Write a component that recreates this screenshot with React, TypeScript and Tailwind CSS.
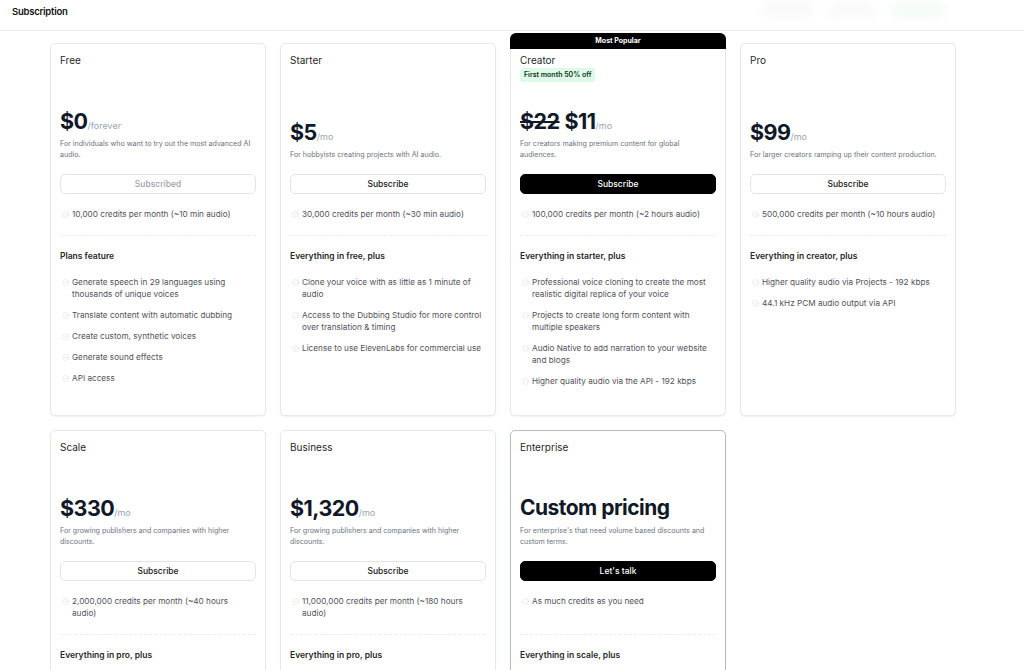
import React from "react";
import { CircleCheck } from "lucide-react";

type Plan = {
  name: string;
  badge?: string;
  popular?: boolean;
  strike?: string;
  price: string;
  unit?: string;
  desc: string;
  button: string;
  variant: "outline" | "dark" | "muted";
  credit: string;
  tallCredit?: boolean;
  heading: string;
  features: string[];
  highlight?: boolean;
};

const plans: Plan[] = [
  {
    name: "Free",
    price: "$0",
    unit: "/forever",
    desc: "For individuals who want to try out the most advanced AI audio.",
    button: "Subscribed",
    variant: "muted",
    credit: "10,000 credits per month (~10 min audio)",
    heading: "Plans feature",
    features: [
      "Generate speech in 29 languages using thousands of unique voices",
      "Translate content with automatic dubbing",
      "Create custom, synthetic voices",
      "Generate sound effects",
      "API access",
    ],
  },
  {
    name: "Starter",
    price: "$5",
    unit: "/mo",
    desc: "For hobbyists creating projects with AI audio.",
    button: "Subscribe",
    variant: "outline",
    credit: "30,000 credits per month (~30 min audio)",
    heading: "Everything in free, plus",
    features: [
      "Clone your voice with as little as 1 minute of audio",
      "Access to the Dubbing Studio for more control over translation & timing",
      "License to use ElevenLabs for commercial use",
    ],
  },
  {
    name: "Creator",
    badge: "First month 50% off",
    popular: true,
    strike: "$22",
    price: "$11",
    unit: "/mo",
    desc: "For creators making premium content for global audiences.",
    button: "Subscribe",
    variant: "dark",
    credit: "100,000 credits per month (~2 hours audio)",
    heading: "Everything in starter, plus",
    features: [
      "Professional voice cloning to create the most realistic digital replica of your voice",
      "Projects to create long form content with multiple speakers",
      "Audio Native to add narration to your website and blogs",
      "Higher quality audio via the API - 192 kbps",
    ],
  },
  {
    name: "Pro",
    price: "$99",
    unit: "/mo",
    desc: "For larger creators ramping up their content production.",
    button: "Subscribe",
    variant: "outline",
    credit: "500,000 credits per month (~10 hours audio)",
    heading: "Everything in creator, plus",
    features: [
      "Higher quality audio via Projects - 192 kbps",
      "44.1 kHz PCM audio output via API",
    ],
  },
  {
    name: "Scale",
    price: "$330",
    unit: "/mo",
    desc: "For growing publishers and companies with higher discounts.",
    button: "Subscribe",
    variant: "outline",
    credit: "2,000,000 credits per month (~40 hours audio)",
    tallCredit: true,
    heading: "Everything in pro, plus",
    features: ["3 Workspace seats", "Priority support"],
  },
  {
    name: "Business",
    price: "$1,320",
    unit: "/mo",
    desc: "For growing publishers and companies with higher discounts.",
    button: "Subscribe",
    variant: "outline",
    credit: "11,000,000 credits per month (~180 hours audio)",
    tallCredit: true,
    heading: "Everything in pro, plus",
    features: ["Low-latency TTS as low as 5c/min", "5 Workspace seats"],
  },
  {
    name: "Enterprise",
    price: "Custom pricing",
    desc: "For enterprise's that need volume based discounts and custom terms.",
    button: "Let's talk",
    variant: "dark",
    credit: "As much credits as you need",
    tallCredit: true,
    heading: "Everything in scale, plus",
    features: ["Custom terms & assurance", "Dedicated support"],
    highlight: true,
  },
];

function Item({ text }: { text: string }) {
  return (
    <div className="flex items-start gap-[3px]">
      <CircleCheck size={7} strokeWidth={1.6} className="mt-[3px] ml-[2px] shrink-0 text-[#d4d4d8]" />
      <span className="max-w-[181px] text-[8.2px] leading-[12px] text-[#52525b]">{text}</span>
    </div>
  );
}

function PlanCard({ plan }: { plan: Plan }) {
  const btn =
    plan.variant === "dark"
      ? "bg-black text-white border-black"
      : plan.variant === "muted"
      ? "bg-white text-[#a1a1aa] border-[#e4e4e7]"
      : "bg-white text-[#18181b] border-[#e4e4e7]";
  const custom = !plan.unit;

  return (
    <div
      className={`relative rounded-[5px] border bg-white pl-[9px] pr-[8px] pt-[9px] pb-[28px] shadow-[0_1px_2px_rgba(0,0,0,0.06)] ${
        plan.highlight ? "border-[#b7bccb]" : "border-[#e8e8eb]"
      }`}
    >
      {plan.popular && (
        <div className="absolute left-[-1px] right-[-1px] top-[-11px] flex h-[16px] items-center justify-center rounded-t-[6px] bg-black text-[7px] font-bold text-white">
          Most Popular
        </div>
      )}

      <div className="flex h-[107px] flex-col justify-between">
        <div className="flex flex-col items-start gap-[1px]">
          <span className="text-[10px] leading-[14px] text-[#27272a]">{plan.name}</span>
          {plan.badge && (
            <span className="rounded-[3px] bg-[#dcfce7] px-[4px] text-[7px] font-semibold leading-[14px] text-[#14301f]">
              {plan.badge}
            </span>
          )}
        </div>
        <div>
          <div className="flex items-baseline">
            {plan.strike && (
              <span className="mr-[5px] text-[21.5px] font-bold leading-[28px] tracking-tight text-[#111827] line-through decoration-2">
                {plan.strike}
              </span>
            )}
            <span
              className={`font-bold tracking-tight text-[#111827] ${
                custom ? "text-[21px] leading-[28px]" : "text-[21.5px] leading-[28px]"
              }`}
            >
              {plan.price}
            </span>
            {plan.unit && <span className="text-[9px] text-[#9ca3af]">{plan.unit}</span>}
          </div>
          <p className="mt-[4px] max-w-[193px] text-[7.1px] leading-[10.5px] text-[#6b7280]">{plan.desc}</p>
        </div>
      </div>

      <button
        className={`mt-[14px] flex h-[20px] w-[196px] items-center justify-center rounded-[5px] border text-[8.5px] font-medium ${btn}`}
      >
        {plan.button}
      </button>

      <div className={`mt-[14px] ${plan.tallCredit ? "min-h-[24px]" : ""}`}>
        <Item text={plan.credit} />
      </div>

      <div className="mt-[15px] w-[196px] border-t border-dashed border-[#ececef]" />

      <div className="mt-[14px] text-[8.5px] font-semibold leading-[12px] text-[#27272a]">{plan.heading}</div>

      <div className="mt-[14px] flex flex-col gap-[9px]">
        {plan.features.map((f) => (
          <Item key={f} text={f} />
        ))}
      </div>
    </div>
  );
}

export default function App() {
  return (
    <div className="min-h-screen bg-white font-['Inter',sans-serif]">
      <header className="flex h-[31px] items-start border-b border-[#ececef] px-[12px] pt-[6px]">
        <h1 className="text-[9.5px] font-semibold leading-[12px] tracking-tight text-[#111]">Subscription</h1>
        <div className="ml-auto mr-[66px] mt-[-4px] flex gap-[14px] opacity-40">
          <div className="h-[16px] w-[52px] rounded-md bg-[#f1f1f1] blur-[5px]" />
          <div className="h-[16px] w-[48px] rounded-md bg-[#f2f2f2] blur-[5px]" />
          <div className="h-[16px] w-[56px] rounded-md bg-[#e6f7e9] blur-[5px]" />
        </div>
      </header>

      <main className="grid grid-cols-[repeat(4,216px)] gap-x-[14px] gap-y-[14px] pl-[50px] pt-[12px] pb-10">
        {plans.map((p) => (
          <PlanCard key={p.name} plan={p} />
        ))}
      </main>
    </div>
  );
}
